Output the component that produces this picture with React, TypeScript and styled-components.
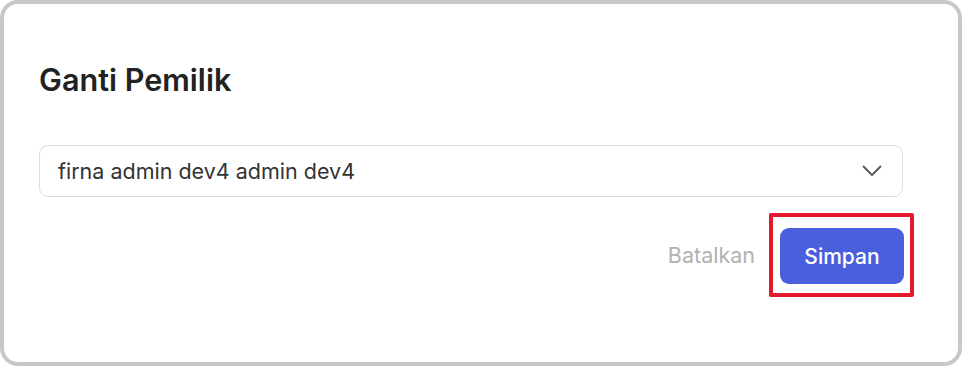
import React from "react";
import styled, { createGlobalStyle } from "styled-components";

const Global = createGlobalStyle`
  html, body { margin: 0; padding: 0; background: #ffffff; }
  body { font-family: Inter, "Noto Sans", sans-serif; }
  * { box-sizing: border-box; }
`;

const Card = styled.div`
  width: 962px;
  height: 366px;
  border: 4.5px solid #c8c8c8;
  border-radius: 18px;
  background: #ffffff;
  padding: 58px 55px 0 35px;
  display: flex;
  flex-direction: column;
`;

const Title = styled.h2`
  margin: 0;
  font-size: 30.6px;
  font-weight: 600;
  line-height: 36px;
  color: #222222;
`;

const Select = styled.div`
  margin-top: 47px;
  height: 52px;
  border: 1px solid #dcdcdc;
  border-radius: 9px;
  display: flex;
  align-items: center;
  justify-content: space-between;
  padding: 0 20px 0 18px;
  font-size: 21.5px;
  color: #333333;
`;

const Footer = styled.div`
  margin-top: 16px;
  display: flex;
  justify-content: flex-end;
  align-items: center;
  gap: 14px;
  margin-right: -11px;
`;

const CancelButton = styled.button`
  border: none;
  background: none;
  padding: 0;
  font-family: inherit;
  font-size: 21.5px;
  color: #b2b2b2;
  cursor: pointer;
`;

const Highlight = styled.div`
  border: 4px solid #e3182d;
  border-radius: 2px;
  padding: 11px 6px 9px 7px;
`;

const PrimaryButton = styled.button`
  width: 124px;
  height: 56px;
  border: none;
  border-radius: 9px;
  background: #4a5fdc;
  color: #ffffff;
  font-family: inherit;
  font-size: 21px;
  font-weight: 500;
  cursor: pointer;
`;

const Chevron = () => (
  <svg width="20" height="12" viewBox="0 0 20 12" fill="none">
    <path d="M1.5 1.5 L10 10 L18.5 1.5" stroke="#555" strokeWidth="1.8" strokeLinecap="round" strokeLinejoin="round" />
  </svg>
);

export default function App() {
  return (
    <>
      <Global />
      <Card>
        <Title>Ganti Pemilik</Title>
        <Select>
          <span>firna admin dev4 admin dev4</span>
          <Chevron />
        </Select>
        <Footer>
          <CancelButton>Batalkan</CancelButton>
          <Highlight>
            <PrimaryButton>Simpan</PrimaryButton>
          </Highlight>
        </Footer>
      </Card>
    </>
  );
}
